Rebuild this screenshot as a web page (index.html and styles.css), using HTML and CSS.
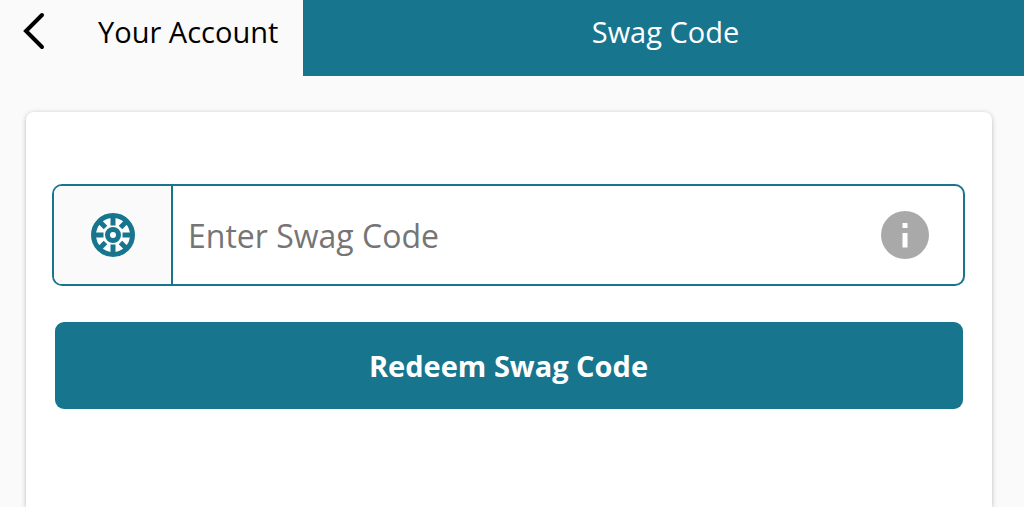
FILE: index.html
```html
<!DOCTYPE html>
<html lang="en">
<head>
    <meta charset="UTF-8">
    <meta name="viewport" content="width=device-width, initial-scale=1.0">
    <title>Swag Code</title>
    <link rel="stylesheet" href="styles.css">
</head>
<body>
    <header class="header">
        <a class="back" href="#">
            <svg class="back-icon" viewBox="0 0 24 40" aria-hidden="true">
                <path d="M20 4 L4 20 L20 36" />
            </svg>
            <span>Your Account</span>
        </a>
        <h1 class="title">Swag Code</h1>
    </header>

    <main class="card">
        <form>
            <div class="code-field">
                <label class="code-label" for="code" aria-label="Swag Code">
                    <svg class="wheel" viewBox="0 0 44 44" aria-hidden="true">
                        <circle class="wheel-inside" cx="22" cy="22" r="20" />
                        <circle class="wheel-rim" cx="22" cy="22" r="19.5" />
                        <path class="wheel-spokes" d="M22 4V12.500 M22 31.500V40 M4 22H12.500 M31.500 22H40 M9 9L14.500 14.500 M29.500 29.500L35 35 M35 9L29.500 14.500 M14.500 29.500L9 35" />
                        <circle class="wheel-hub" cx="22" cy="22" r="5.5" />
                    </svg>
                </label>
                <input class="code-input" type="text" id="code" placeholder="Enter Swag Code">
                <button class="info" type="button" aria-label="Info">
                    <svg viewBox="0 0 48 48" aria-hidden="true">
                        <circle cx="24" cy="24" r="24" fill="#a9a9a9" />
                        <path d="M21.5 12H26.5V17H21.5Z M21.5 22H26.5V36.500H21.5Z" fill="#fff" />
                    </svg>
                </button>
            </div>
            <button class="redeem" type="submit">Redeem Swag Code</button>
        </form>
    </main>
</body>
</html>
```

FILE: styles.css
```css
* {
    box-sizing: border-box;
}
body {
    margin: 0;
    min-height: 100vh;
    display: flex;
    flex-direction: column;
    font-family: "Open Sans", "Noto Sans", sans-serif;
    background-color: #fafafa;
    color: #000;
}
.header {
    display: flex;
    font-size: 29px;
    line-height: 64px;
}
.back {
    display: flex;
    width: 303px;
    padding-left: 20px;
    color: #000;
    text-decoration: none;
}
.back-icon {
    width: 28px;
    height: 40px;
    margin: 11px 50px 0 0;
    fill: none;
    stroke: #000;
    stroke-width: 4;
    stroke-linecap: round;
    stroke-linejoin: miter;
}
.title {
    flex: 1;
    margin: 0;
    padding: 0 0 12px 4px;
    font-size: 29px;
    font-weight: 400;
    text-align: center;
    background-color: #18758e;
    color: #fff;
}
.card {
    flex: 1;
    margin: 36px 32px 0 26px;
    padding: 72px 27px 0 26px;
    border-radius: 8px 8px 0 0;
    background-color: #fff;
    box-shadow: 0 1px 5px rgba(0, 0, 0, 0.25);
}
.code-field {
    display: flex;
    height: 102px;
    border: 2px solid #18758e;
    border-radius: 10px;
    overflow: hidden;
}
.code-label {
    display: flex;
    align-items: center;
    justify-content: center;
    width: 119px;
    border-right: 2px solid #18758e;
    background-color: #fafafa;
}
.wheel {
    width: 44px;
    height: 44px;
    fill: none;
    stroke: #18758e;
}
.wheel-inside {
    fill: #fff;
    stroke: none;
}
.wheel-rim {
    stroke-width: 5;
}
.wheel-spokes {
    stroke-width: 5;
}
.wheel-hub {
    stroke-width: 5;
}
.code-input {
    flex: 1;
    min-width: 0;
    padding: 0 15px;
    border: 0;
    outline: 0;
    font: inherit;
    font-size: 32px;
    background: none;
}
.code-input::placeholder {
    color: #757575;
}
.info {
    align-self: center;
    width: 48px;
    height: 48px;
    margin-right: 34px;
    padding: 0;
    border: 0;
    background: none;
}
.info svg {
    display: block;
}
.redeem {
    display: block;
    width: calc(100% - 5px);
    height: 87px;
    margin: 36px auto 0;
    border: 0;
    border-radius: 9px;
    font: inherit;
    font-size: 29px;
    font-weight: 700;
    background-color: #18758e;
    color: #fff;
}
```
